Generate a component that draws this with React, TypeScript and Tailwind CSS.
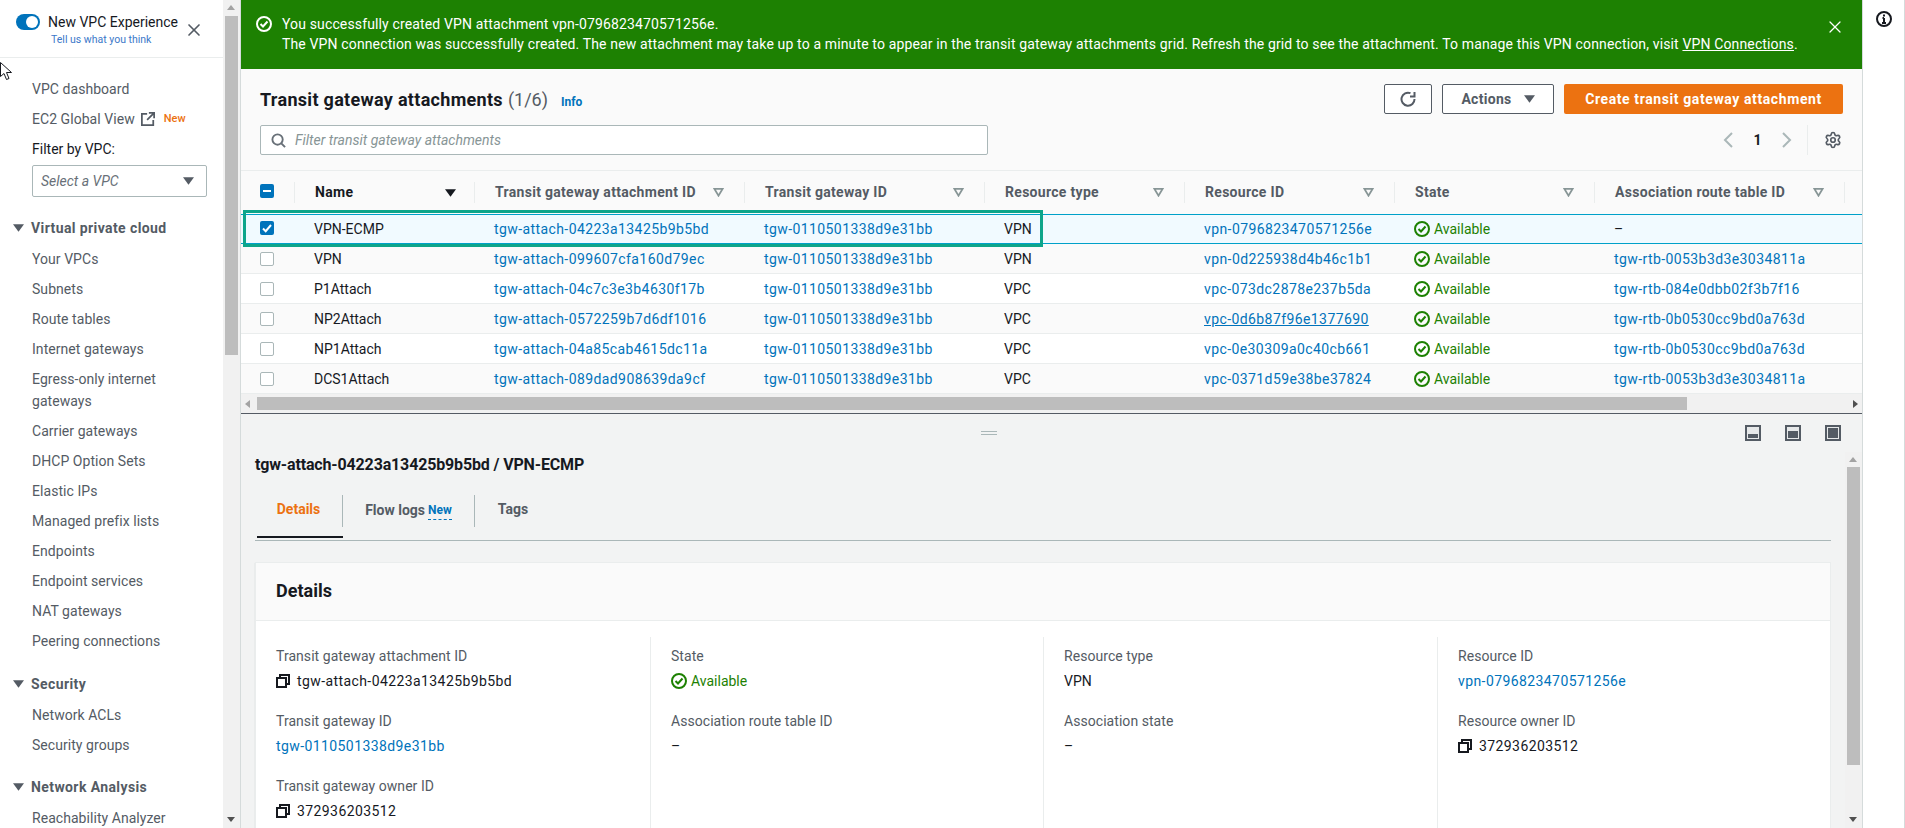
import { Settings, X } from "lucide-react"

const navTop = ["Your VPCs", "Subnets", "Route tables", "Internet gateways", "Egress-only internet gateways", "Carrier gateways", "DHCP Option Sets", "Elastic IPs", "Managed prefix lists", "Endpoints", "Endpoint services", "NAT gateways", "Peering connections"]

const heads = ["Transit gateway attachment ID", "Transit gateway ID", "Resource type", "Resource ID", "State", "Association route table ID"]

const rows = [
	{ name: "VPN-ECMP", id: "tgw-attach-04223a13425b9b5bd", type: "VPN", res: "vpn-0796823470571256e", rtb: "" },
	{ name: "VPN", id: "tgw-attach-099607cfa160d79ec", type: "VPN", res: "vpn-0d225938d4b46c1b1", rtb: "tgw-rtb-0053b3d3e3034811a" },
	{ name: "P1Attach", id: "tgw-attach-04c7c3e3b4630f17b", type: "VPC", res: "vpc-073dc2878e237b5da", rtb: "tgw-rtb-084e0dbb02f3b7f16" },
	{ name: "NP2Attach", id: "tgw-attach-0572259b7d6df1016", type: "VPC", res: "vpc-0d6b87f96e1377690", rtb: "tgw-rtb-0b0530cc9bd0a763d" },
	{ name: "NP1Attach", id: "tgw-attach-04a85cab4615dc11a", type: "VPC", res: "vpc-0e30309a0c40cb661", rtb: "tgw-rtb-0b0530cc9bd0a763d" },
	{ name: "DCS1Attach", id: "tgw-attach-089dad908639da9cf", type: "VPC", res: "vpc-0371d59e38be37824", rtb: "tgw-rtb-0053b3d3e3034811a" },
]

const gridCols = "grid grid-cols-[54px_180px_270px_240px_200px_210px_200px_250px_1fr]"
const idText = "tracking-[0.41px] whitespace-nowrap"

const StatusIcon = ({ className = "text-[#1d8102]" }: { className?: string }) => (
	<svg viewBox="0 0 16 16" className={`w-4 h-4 shrink-0 ${className}`} fill="none" stroke="currentColor" strokeWidth="2">
		<circle cx="8" cy="8" r="7" />
		<path d="M4.500 8l2.500 2.500 4.500-5" />
	</svg>
)

const CopyIcon = () => (
	<svg viewBox="0 0 14 14" className="w-[14px] h-[14px] mr-[3px] shrink-0 text-[#16191f]" fill="none" stroke="currentColor" strokeWidth="2">
		<rect x="1" y="4" width="9" height="9" />
		<path d="M4 3.500V1h9v9h-2.500" />
	</svg>
)

const Caret = ({ className = "" }: { className?: string }) => (
	<svg viewBox="0 0 12 8" className={`w-[11px] h-[8px] ${className}`} fill="currentColor">
		<path d="M0 0h12L6 8z" />
	</svg>
)

const FilterCaret = () => (
	<svg viewBox="0 0 12 10" className="w-[11px] h-[9px] text-[#879596]" fill="none" stroke="currentColor" strokeWidth="2">
		<path d="M1.500 1h9L6 8.500z" />
	</svg>
)

const PanelIcon = ({ fill }: { fill: string }) => (
	<div className="w-4 h-4 border-2 border-[#545b64] p-px bg-[#e6e8e9] flex items-end">
		<div className={`w-full bg-[#545b64] ${fill}`}></div>
	</div>
)

const ScrollV = ({ thumbTop, thumbH }: { thumbTop: string; thumbH: string }) => (
	<div className="w-[17px] h-full bg-[#f1f1f1] relative shrink-0">
		<div className="absolute top-[5px] left-[4px] w-0 h-0 border-x-[4px] border-x-transparent border-b-[5px] border-b-[#a3a3a3]"></div>
		<div className={`absolute left-[2px] w-[13px] bg-[#bdbdbd] ${thumbTop} ${thumbH}`}></div>
		<div className="absolute bottom-[6px] left-[4px] w-0 h-0 border-x-[4px] border-x-transparent border-t-[5px] border-t-[#505050]"></div>
	</div>
)

const Field = ({ label, children }: { label: string; children: React.ReactNode }) => (
	<div className="h-[65px]">
		<div className="text-[#545b64] h-[20px] leading-[20px] tracking-[0.05px]">{label}</div>
		<div className="mt-[5px] h-[20px] leading-[20px] flex items-center gap-[4px] text-[#16191f]">{children}</div>
	</div>
)

const NavItem = ({ children }: { children: React.ReactNode }) => (
	<div className="pl-[32px] pr-[12px] py-1 leading-[22px] text-[#545b64] tracking-[0.05px]">{children}</div>
)

const NavHead = ({ label, className }: { label: string; className: string }) => (
	<div className={`flex items-center pl-[13px] h-[22px] gap-[7px] font-bold tracking-[0.4px] text-[#545b64] ${className}`}>
		<Caret className="text-[#545b64]" />
		{label}
	</div>
)

export default function App() {
	return (
		<div className="w-[1905px] h-[828px] overflow-hidden flex bg-white text-[14px] text-[#16191f] [font-family:Roboto,'Liberation_Sans',sans-serif]">
			{/* left nav */}
			<aside className="w-[223px] h-full shrink-0 overflow-hidden relative">
				<div className="h-[58px] border-b border-[#eaeded] relative">
					<div className="absolute left-[16px] top-[14px] w-[24px] h-[16px] rounded-full bg-[#0073bb]">
						<div className="absolute right-[2px] top-[2px] w-[12px] h-[12px] rounded-full bg-white"></div>
					</div>
					<div className="absolute left-[48px] top-[12px] leading-[20px] text-[#16191f] whitespace-nowrap">New VPC Experience</div>
					<div className="absolute left-[51px] top-[32px] text-[10.5px] leading-[16px] text-[#3b78c9] whitespace-nowrap">Tell us what you think</div>
					<X className="absolute left-[184px] top-[20px] w-[20px] h-[20px] text-[#545b64]" strokeWidth={2} />
				</div>
				<svg viewBox="0 0 12 18" className="absolute left-0 top-[62px] w-[12px] h-[18px]" fill="#fff" stroke="#16191f" strokeWidth="1">
					<path d="M.5.5v14l3.500-3 2.500 6 2.500-1-2.500-6h5z" />
				</svg>
				<div className="pt-[16px]">
					<NavItem>VPC dashboard</NavItem>
					<NavItem>
						<span className="flex items-center whitespace-nowrap">
							EC2 Global View
							<svg viewBox="0 0 16 16" className="w-[14px] h-[14px] ml-[6px] text-[#545b64]" fill="none" stroke="currentColor" strokeWidth="2">
								<path d="M7 2H1v13h13V9M9 1h6v6M15 1L7 9" />
							</svg>
							<span className="ml-[9px] text-[11px] font-medium text-[#ec7211]">New</span>
						</span>
					</NavItem>
					<div className="pl-[32px] py-1 leading-[22px] text-[#16191f]">Filter by VPC:</div>
					<div className="ml-[32px] w-[175px] h-[32px] border border-[#aab7b8] rounded-[2px] mt-[1px] flex items-center justify-between pl-[8px] pr-[12px] italic text-[#687078]">
						Select a VPC
						<Caret className="text-[#545b64]" />
					</div>
					<NavHead label="Virtual private cloud" className="mt-[20px] mb-[5px]" />
					{navTop.map((n) => (
						<NavItem key={n}>{n}</NavItem>
					))}
					<NavHead label="Security" className="mt-[17px] mb-[5px]" />
					<NavItem>Network ACLs</NavItem>
					<NavItem>Security groups</NavItem>
					<NavHead label="Network Analysis" className="mt-[16px] mb-[5px]" />
					<NavItem>Reachability Analyzer</NavItem>
				</div>
			</aside>
			<ScrollV thumbTop="top-[16px]" thumbH="h-[339px]" />

			{/* main */}
			<main className="w-[1622px] h-full shrink-0 flex flex-col border-l border-[#d5dbdb] overflow-hidden">
				<div className="h-[69px] shrink-0 bg-[#1d8102] text-white flex pl-[15px] pr-[17px] pt-[14px] leading-[20px]">
					<StatusIcon className="text-white mt-[2px]" />
					<div className="ml-[10px] flex-1 whitespace-nowrap tracking-[0.14px]">
						<div>You successfully created VPN attachment vpn-0796823470571256e.</div>
						<div>
							The VPN connection was successfully created. The new attachment may take up to a minute to appear in the transit gateway attachments grid. Refresh the grid to see the attachment. To manage this VPN connection, visit <span className="underline">VPN Connections</span>.
						</div>
					</div>
					<X className="w-[20px] h-[20px] mt-[3px]" strokeWidth={1.5} />
				</div>

				<div className="h-[101px] shrink-0 bg-[#fafafa] pl-[19px] pr-[19px]">
					<div className="flex items-center justify-between pt-[15px]">
						<div className="flex items-baseline">
							<span className="text-[18px] font-bold tracking-[0.3px]">Transit gateway attachments</span>
							<span className="text-[18px] text-[#545b64] ml-[5px]">(1/6)</span>
							<span className="text-[12px] font-bold text-[#0073bb] ml-[13px]">Info</span>
						</div>
						<div className="flex items-center gap-[10px]">
							<div className="w-[48px] h-[30px] border border-[#545b64] rounded-[2px] bg-white flex items-center justify-center">
								<svg viewBox="0 0 16 16" className="w-[16px] h-[16px] text-[#545b64]" fill="none" stroke="currentColor" strokeWidth="2">
									<path d="M10.500 2.200A6.500 6.500 0 1 0 14.500 8M14.500 1v4.500H10" />
								</svg>
							</div>
							<div className="w-[112px] h-[30px] border border-[#545b64] rounded-[2px] bg-white flex items-center justify-center gap-[12px] font-bold tracking-[0.3px] text-[#545b64]">
								Actions
								<Caret className="text-[#545b64]" />
							</div>
							<div className="w-[279px] h-[30px] bg-[#ec7211] rounded-[2px] flex items-center justify-center font-bold tracking-[0.6px] text-white">Create transit gateway attachment</div>
						</div>
					</div>
					<div className="flex items-center justify-between mt-[11px]">
						<div className="w-[728px] h-[30px] border border-[#aab7b8] rounded-[2px] bg-white flex items-center pl-[10px] gap-[9px] italic text-[#879596]">
							<svg viewBox="0 0 16 16" className="w-[15px] h-[15px] text-[#687078] shrink-0" fill="none" stroke="currentColor" strokeWidth="2">
								<circle cx="7" cy="7" r="5.500" />
								<path d="M11 11l4 4" />
							</svg>
							Filter transit gateway attachments
						</div>
						<div className="flex items-center h-[30px]">
							<svg viewBox="0 0 10 16" className="w-[10px] h-[16px] text-[#aab7b8]" fill="none" stroke="currentColor" strokeWidth="2">
								<path d="M9 1L2 8l7 7" />
							</svg>
							<span className="w-[49px] text-center font-bold">1</span>
							<svg viewBox="0 0 10 16" className="w-[10px] h-[16px] text-[#aab7b8]" fill="none" stroke="currentColor" strokeWidth="2">
								<path d="M1 1l7 7-7 7" />
							</svg>
							<div className="ml-[15px] mr-[16px] w-px h-[30px] bg-[#eaeded]"></div>
							<Settings className="w-[18px] h-[18px] mr-px text-[#545b64]" strokeWidth={2.2} />
						</div>
					</div>
				</div>

				{/* table */}
				<div className="shrink-0 bg-[#fafafa] border-t border-[#eaeded] relative">
					<div className={`${gridCols} h-[43px] items-center font-bold tracking-[0.3px] text-[#545b64]`}>
						<div className="flex items-center justify-between pl-[19px] pb-[3px] h-[21px] border-r border-[#eaeded]">
							<div className="w-[14px] h-[14px] rounded-[2px] bg-[#0073bb] flex items-center justify-center">
								<div className="w-[8px] h-[2px] bg-white"></div>
							</div>
						</div>
						<div className="flex items-center justify-between pl-[20px] pr-[18px] h-[21px] border-r border-[#eaeded] text-[#16191f]">
							Name
							<Caret className="text-[#16191f]" />
						</div>
						{heads.map((h) => (
							<div key={h} className="flex items-center justify-between pl-[20px] pr-[20px] h-[21px] border-r border-[#eaeded] whitespace-nowrap">
								{h}
								<FilterCaret />
							</div>
						))}
					</div>
					{rows.map((r, i) => (
						<div
							key={r.name}
							className={`${gridCols} items-center ${i === 0 ? "h-[30px] bg-[#f1faff] border-y border-[#00a1c9]" : `h-[30px] pt-px border-b border-[#eaeded] ${i % 2 === 0 ? "bg-white" : "bg-[#fafafa]"}`}`}
						>
							<div className={`pl-[19px] ${i === 0 ? "pb-[2px]" : "pb-px"}`}>
								{i === 0 ? (
									<div className="w-[14px] h-[14px] rounded-[2px] bg-[#0073bb] flex items-center justify-center">
										<svg viewBox="0 0 14 14" className="w-[14px] h-[14px]" fill="none" stroke="#fff" strokeWidth="2">
											<path d="M3 7.500l2.700 2.700L11 4" />
										</svg>
									</div>
								) : (
									<div className="w-[14px] h-[14px] rounded-[2px] bg-white border border-[#aab7b8]"></div>
								)}
							</div>
							<div className="pl-[19px]">{r.name}</div>
							<div className={`pl-[19px] text-[#0073bb] ${idText}`}>{r.id}</div>
							<div className={`pl-[19px] text-[#0073bb] ${idText}`}>tgw-0110501338d9e31bb</div>
							<div className="pl-[19px]">{r.type}</div>
							<div className={`pl-[19px] text-[#0073bb] ${idText} ${i === 3 ? "underline" : ""}`}>{r.res}</div>
							<div className="pl-[19px] flex items-center gap-[4px] text-[#1d8102]">
								<StatusIcon />
								Available
							</div>
							<div className={`pl-[19px] text-[#0073bb] ${idText}`}>{r.rtb || <span className="text-[#16191f]">–</span>}</div>
						</div>
					))}
					{/* horizontal scrollbar */}
					<div className="h-[19px] bg-[#f1f1f1] flex items-center">
						<div className="ml-[4px] w-0 h-0 border-y-[4px] border-y-transparent border-r-[5px] border-r-[#a3a3a3]"></div>
						<div className="ml-[7px] w-[1430px] h-[13px] bg-[#bdbdbd]"></div>
						<div className="ml-auto mr-[4px] w-0 h-0 border-y-[4px] border-y-transparent border-l-[5px] border-l-[#505050]"></div>
					</div>
					{/* annotation drawn on the screenshot */}
					<div className="absolute left-[2px] top-[39px] w-[800px] h-[37px] border-[3px] border-[#0ea58a] pointer-events-none"></div>
				</div>

				{/* split panel */}
				<div className="flex-1 min-h-0 bg-[#f2f3f3] border-t border-[#545b64] flex flex-col">
					<div className="h-[38px] shrink-0 relative flex items-center justify-end pr-[21px] gap-[24px]">
						<div className="absolute left-[740px] top-[17px] w-[16px] h-[4px] border-y border-[#aab7b8]"></div>
						<PanelIcon fill="h-[4px]" />
						<PanelIcon fill="h-[7px]" />
						<PanelIcon fill="h-full" />
					</div>
					<div className="flex-1 min-h-0 flex">
						<div className="w-[1590px] pl-[14px] shrink-0 overflow-hidden">
							<div className="text-[16px] font-bold tracking-[-0.15px] h-[26px] leading-[26px]">tgw-attach-04223a13425b9b5bd / VPN-ECMP</div>
							<div className="relative border-b border-[#aab7b8] h-[63px] flex items-start pt-[17px]">
								<div className="w-[88px] h-[32px] pb-[3px] border-r border-[#aab7b8] font-bold text-[#ec7211] flex items-center justify-center">Details</div>
								<div className="w-[132px] h-[32px] pb-[2px] border-r border-[#aab7b8] font-bold text-[#545b64] flex items-center justify-center gap-[3px]">
									Flow logs
									<span className="text-[12px] text-[#0073bb] border-b border-dashed border-[#0073bb]">New</span>
								</div>
								<div className="w-[68px] h-[32px] pb-[3px] font-bold text-[#545b64] flex items-center justify-center pl-[8px]">Tags</div>
								<div className="absolute left-[2px] bottom-[2px] w-[86px] h-[2px] bg-[#16191f]"></div>
							</div>
							<div className="mt-[21px] border border-[#eaeded] bg-white shadow-[0_1px_1px_rgba(0,28,36,0.2)] h-[300px]">
								<div className="h-[58px] pb-[2px] bg-[#fafafa] border-b border-[#eaeded] flex items-center pl-[20px] text-[18px] font-bold">Details</div>
								<div className="grid grid-cols-[394px_393px_394px_1fr] pt-[16px] h-[240px]">
									<div className="pl-[20px] pt-[9px]">
										<Field label="Transit gateway attachment ID"><CopyIcon /><span className={idText}>tgw-attach-04223a13425b9b5bd</span></Field>
										<Field label="Transit gateway ID"><span className={`text-[#0073bb] ${idText}`}>tgw-0110501338d9e31bb</span></Field>
										<Field label="Transit gateway owner ID"><CopyIcon /><span className={idText}>372936203512</span></Field>
									</div>
									<div className="pl-[20px] pt-[9px] border-l border-[#eaeded]">
										<Field label="State"><StatusIcon /><span className="text-[#1d8102]">Available</span></Field>
										<Field label="Association route table ID">–</Field>
									</div>
									<div className="pl-[20px] pt-[9px] border-l border-[#eaeded]">
										<Field label="Resource type">VPN</Field>
										<Field label="Association state">–</Field>
									</div>
									<div className="pl-[20px] pt-[9px] border-l border-[#eaeded]">
										<Field label="Resource ID"><span className={`text-[#0073bb] ${idText}`}>vpn-0796823470571256e</span></Field>
										<Field label="Resource owner ID"><CopyIcon /><span className={idText}>372936203512</span></Field>
									</div>
								</div>
							</div>
						</div>
						<div className="ml-auto h-full">
							<ScrollV thumbTop="top-[15px]" thumbH="h-[298px]" />
						</div>
					</div>
				</div>
			</main>

			{/* right rail */}
			<div className="flex-1 border-l border-[#d5dbdb] border-r pt-[11px] pl-[13px]">
				<svg viewBox="0 0 16 16" className="w-4 h-4 text-[#16191f]" fill="none" stroke="currentColor" strokeWidth="2">
					<circle cx="8" cy="8" r="7" />
					<path d="M8 7v5M6 12h4M6.500 7H8M8 3.500v2" />
				</svg>
			</div>
		</div>
	)
}
